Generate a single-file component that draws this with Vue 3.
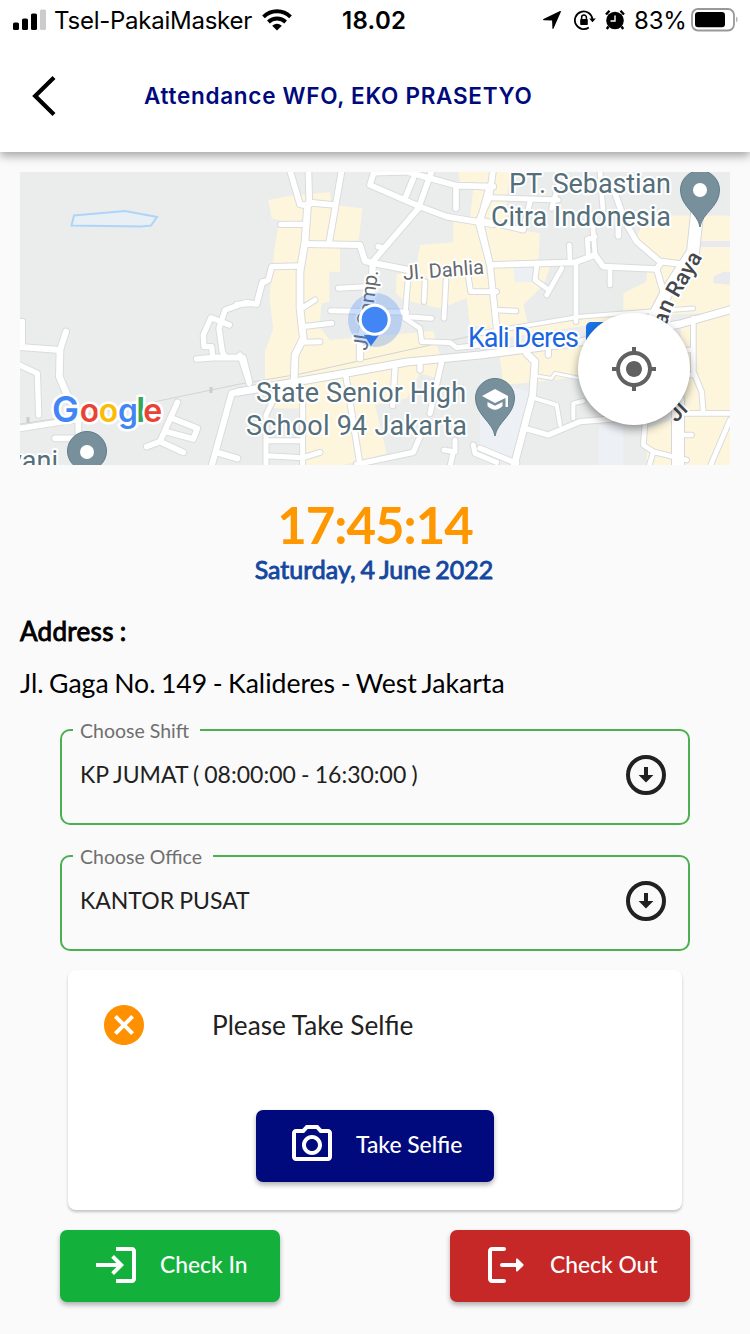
<script setup>
// Map geometry is stored in three side-by-side tiles, each on a 3x grid.
const tiles = [
  {
    x: 10,
    blocks: [],
    roads: [
      ['M20 545L150 555L168 500M36 470L36 545', 18],
      ['M150 555L148 635L180 710', 20],
      ['M20 596L82 625L86 750', 16],
      ['M20 792L220 760M205 760V800M135 820H190', 17],
      ['M560 582L620 577L700 578L718 650', 17],
      ['M658 480L603 458L580 510L582 545H605L608 575', 16],
      ['M758 350L740 418L710 412L645 435L627 490L637 560L645 575', 16],
      ['M603 910L665 685L760 670M620 862L682 880', 18],
      ['M502 712L450 830L410 845M450 830L520 862M487 760L562 790L550 822L470 800', 17]
    ]
  },
  {
    x: 240,
    blocks: [
      ['M85 105L150 92L270 82L275 120L367 130L355 235L300 235V320H268V410L245 415L238 485L270 525L580 498L600 570L590 640L540 625L500 700L405 720L440 865L350 890L290 905H190L170 660L75 650V560L100 490L88 400L105 240L118 165L95 160Z', '#fef6dc'],
      ['M655 15H800V180L735 190L770 490L690 480L680 400L600 430L490 405L468 385L470 330L530 300L540 240L640 232V170L690 165L700 70L660 50Z', '#fef6dc'],
      ['M75 730H180V700L100 710Z', '#fef6dc']
    ],
    roads: [
      ['M148 10L180 118L203 123M205 10L208 118M306 10L268 230M208 113L285 120', 17],
      ['M203 118L195 230L180 320V430L190 520L165 570L162 655', 20],
      ['M122 178H195', 16],
      ['M195 237L360 240L375 288L400 294L520 318', 18],
      ['M180 303L95 305L85 345L65 355L50 415L-10 418', 16],
      ['M185 430L225 405M185 485L275 475M188 532L240 530M295 370L378 365M272 437L500 442', 15],
      ['M398 292L395 400L360 520V580', 19],
      ['M398 290L535 130L578 10M415 245L430 250', 17],
      ['M405 10L390 60L540 125L620 155L760 178M405 23L500 20L650 62L760 65M520 40L495 100M648 70V130', 17],
      ['M748 65L720 170L750 300', 18],
      ['M505 330L495 455L575 460M555 350L552 410M618 345L612 460M685 335L692 380H770', 14],
      ['M495 460L540 490L545 530L630 533L650 548L770 535', 14],
      ['M0 570L28 655M318 635L360 900M465 610L458 722M540 595V615M605 590L570 745M540 815L520 862L350 898', 16],
      ['M162 655L100 705L78 750V905M188 670V905M80 827H185M80 872L190 878L240 862M612 855L640 860L630 905M645 825L645 860M700 840L705 865L770 892', 15]
    ]
  },
  {
    x: 480,
    blocks: [
      ['M40 21H90L80 95L25 90Z', '#fef6dc'],
      ['M15 180L180 205L175 290L30 300Z', '#fef6dc'],
      ['M30 305L560 300V445L0 530V300Z', '#fef6dc'],
      ['M285 300H500V350L430 385V440L145 480L130 420L190 360L210 305Z', '#e9eceb'],
      ['M100 305H165L170 350L105 352Z', '#eceff4'],
      ['M500 152H760V440L530 450L490 360L540 290L460 235Z', '#fef6dc'],
      ['M60 575L400 520V620L220 645L70 660Z', '#fef6dc'],
      ['M600 480L760 435V910H500V790L620 750Z', '#fef6dc'],
      ['M0 640L150 680L95 880L0 850Z', '#edf0f4'],
      ['M355 780H430V910H355Z', '#edf0f5'],
      ['M700 335L730 320H760V360L700 355Z', '#e8eaed'],
      ['M660 228H760V246H660Z', '#e8eaf0']
    ],
    roads: [
      ['M40 10L28 98L-5 170L30 300L50 490', 17],
      ['M0 65H30M28 98L235 105M150 110L130 195L0 165M235 60L215 130', 15],
      ['M30 300L285 292L345 270L370 305L530 312L545 290L625 300', 17],
      ['M45 435L108 438M268 240L270 290M288 290V470M170 305L165 345L200 370M245 310L200 390M390 310V360M325 275L322 222L345 215M345 270L338 180', 14],
      ['M400 70L435 170L470 230L540 290M415 180V212M530 312L550 380', 17],
      ['M360 20L370 150M300 170L340 180', 14],
      ['M0 505L300 455L640 430', 11],
      ['M140 565L165 590L158 690L100 910', 20],
      ['M165 632L215 640L225 625L300 640', 8],
      ['M165 700L230 720L240 780M280 760V715L310 708', 12],
      ['M135 790L205 810L300 770L450 758M0 850L110 895M205 555V570', 16],
      ['M640 460V620L665 680L670 745M600 745H760M750 765L690 905M495 775L490 840L520 860L505 910M520 860L620 885M600 810H635M610 630H645M600 555H640', 14]
    ]
  }
]

const brand = [
  { c: 'G', x: 52, s: 36, fill: '#4285f4' },
  { c: 'o', x: 79.7, s: 32, fill: '#ea4335' },
  { c: 'o', x: 98.8, s: 32, fill: '#fbbc05' },
  { c: 'g', x: 118, s: 32, fill: '#4285f4' },
  { c: 'l', x: 136.3, s: 34, fill: '#34a853' },
  { c: 'e', x: 143.2, s: 32, fill: '#ea4335' }
]

const fields = [
  { label: 'Choose Shift', value: 'KP JUMAT ( 08:00:00 - 16:30:00 )', cls: 'shift' },
  { label: 'Choose Office', value: 'KANTOR PUSAT', cls: 'office' }
]
</script>

<template>
  <div class="screen">
    <header class="top">
      <div class="status">
        <svg class="signal" width="34" height="22" viewBox="0 0 34 22">
          <rect x="0" y="13.5" width="6" height="7.5" rx="1.6" />
          <rect x="9" y="9.5" width="6" height="11.5" rx="1.6" />
          <rect x="18" y="4.5" width="6" height="16.5" rx="1.6" />
          <rect x="27" y="0.5" width="6" height="20.5" rx="1.6" fill="#ccc" />
        </svg>
        <span class="carrier">Tsel-PakaiMasker</span>
        <svg class="wifi" width="30" height="22" viewBox="0 0 30 22">
          <g fill="none" stroke="#000" stroke-width="3.9">
            <path d="M1.5 7.8C9 .4 21 .4 28.500 7.800" />
            <path d="M6.400 13C11.300 8.300 18.700 8.300 23.600 13" />
          </g>
          <path d="M10.200 16.700Q15 12.700 19.800 16.700L15 21.500Z" />
        </svg>
        <span class="clock">18.02</span>
        <svg class="loc" width="20" height="20" viewBox="0 0 20 20"><path d="M18 1Q19.300.6 18.800 2L11.500 18.500Q10.700 19.800 10.400 18.300L10.100 10.500L1.700 10.200Q.3 9.800 1.500 9Z" /></svg>
        <svg class="lock" width="22" height="20" viewBox="0 0 22 20">
          <path d="M14.800 17.400A8.800 8.800 0 1 1 18.400 9" fill="none" stroke="#000" stroke-width="1.800" />
          <path d="M15.200 8.400H21.800L18.500 12.300Z" />
          <rect x="6.200" y="9" width="7.600" height="6" rx=".8" />
          <path d="M7.600 9.500V7.500a2.400 2.400 0 0 1 4.800 0V9.500" fill="none" stroke="#000" stroke-width="1.500" />
        </svg>
        <svg class="alarm" width="20" height="20" viewBox="0 0 20 20">
          <circle cx="10" cy="10.500" r="8.800" />
          <path d="M1 4.500L4.500.8M19 4.500L15.500.8M3.500 16.500L1.800 19M16.500 16.500L18.200 19" stroke="#000" stroke-width="2.400" />
          <path d="M10 5.500V11H5.500" fill="none" stroke="#fff" stroke-width="1.400" />
        </svg>
        <span class="percent">83%</span>
        <svg class="battery" width="48" height="24" viewBox="0 0 48 24">
          <rect x="1" y="1" width="42" height="21.500" rx="6" fill="none" stroke="#999" stroke-width="1.800" />
          <rect x="4" y="4" width="30" height="15.300" rx="3.200" />
          <path d="M45.300 8.300Q47.800 11.500 45.300 14.800Z" fill="#999" />
        </svg>
      </div>
      <div class="bar">
        <svg class="back" width="24" height="40" viewBox="0 0 24 40"><path d="M22 1.500L3.200 20L22 38.500" fill="none" stroke="#000" stroke-width="4.200" /></svg>
        <h1>Attendance WFO, EKO PRASETYO</h1>
      </div>
    </header>

    <section class="map">
      <svg width="710" height="293" viewBox="20 172 710 293">
        <rect x="20" y="172" width="710" height="293" fill="#ebedec" />
        <g v-for="t in tiles" :key="'b' + t.x" :transform="`translate(${t.x} 165) scale(.33333)`">
          <path v-for="(b, i) in t.blocks" :key="i" :d="b[0]" :fill="b[1]" />
        </g>
        <path d="M71.500 225.500L74 215.500L125 211L157 217L151 225.500L141 226.500Z" fill="#e8f0f6" stroke="#aed5f8" stroke-width="2" />
        <path d="M20 424L120 409L240 384L300 374L480 334L600 316" fill="none" stroke="#d2d4d5" stroke-width="1" />
        <path d="M28 417V423M211 387V393" stroke="#ccc" stroke-width="3" />
        <g fill="none" stroke-linecap="round" stroke-linejoin="round">
          <g v-for="t in tiles" :key="'c' + t.x" :transform="`translate(${t.x} 165) scale(.33333)`" stroke="#d9dbdd">
            <path v-for="(r, i) in t.roads" :key="i" :d="r[0]" :stroke-width="r[1] + 6" />
          </g>
          <path d="M238 392L295 382L347 373L407 362L480 355L580 342L680 324L740 307" stroke="#d5d8da" stroke-width="9" />
          <path d="M698 205L693 252L667 292L650 325M678 400V470" stroke="#d5d8da" stroke-width="14" />
          <g v-for="t in tiles" :key="'w' + t.x" :transform="`translate(${t.x} 165) scale(.33333)`" stroke="#fff">
            <path v-for="(r, i) in t.roads" :key="i" :d="r[0]" :stroke-width="r[1]" />
          </g>
          <path d="M238 392L295 382L347 373L407 362L480 355L580 342L680 324L740 307" stroke="#fff" stroke-width="7" />
          <path d="M698 205L693 252L667 292L650 325M678 400V470" stroke="#fff" stroke-width="12" />
        </g>

        <g class="road-name">
          <text x="403.500" y="280" textLength="81" transform="rotate(-4.500 404 279)" font-size="20">Jl. Dahlia</text>
          <text x="367" y="351" textLength="81" transform="rotate(-82 367 351)" font-size="20">Jl. Camp.</text>
          <path id="raya" d="M667 326Q669 310 680 295L709 246" fill="none" />
          <text font-size="22" class="dark"><textPath href="#raya" textLength="78">an Raya</textPath></text>
          <text x="676" y="423" font-size="22" class="dark" transform="rotate(-45 676 423)">Jl</text>
        </g>

        <g class="place">
          <text x="509" y="192.500" textLength="162">PT. Sebastian</text>
          <text x="491" y="225.500" textLength="180">Citra Indonesia</text>
          <text x="256" y="401.500" textLength="210">State Senior High</text>
          <text x="246" y="434.500" textLength="221">School 94 Jakarta</text>
          <text x="9" y="470" textLength="49">yani</text>
          <text x="468" y="346.500" textLength="111" class="transit">Kali Deres</text>
        </g>
        <rect x="586" y="322" width="28" height="28" rx="5" fill="#1a73e8" />

        <g fill="#78909c" stroke="#607d8b" stroke-width="1">
          <circle cx="87" cy="451" r="19.500" />
          <path d="M700 227C698 213 680.500 207 680.500 190A19.500 19.500 0 0 1 719.500 190C719.500 207 702 213 700 227Z" />
          <path d="M495 436C493 422 475.500 415 475.500 398A19.500 19.500 0 0 1 514.500 398C514.500 415 497 422 495 436Z" />
        </g>
        <circle cx="87" cy="452" r="7" fill="#fff" />
        <circle cx="700" cy="190" r="7" fill="#fff" />
        <path d="M482 396L495 389L508 396V407H505.500V398L495 403ZM487.500 402L495 405.800L502.500 402V406Q495 413.500 487.500 406Z" fill="#fff" />

        <circle cx="375" cy="320" r="27" fill="#4285f4" fill-opacity=".28" />
        <path d="M364 335L371 346L379 335Z" fill="#3478e5" />
        <circle cx="374.700" cy="319.700" r="14.500" fill="#4285f4" stroke="#fff" stroke-width="3" />

        <text class="brand" y="422"><tspan v-for="(b, i) in brand" :key="i" :x="b.x" :font-size="b.s" :fill="b.fill">{{ b.c }}</tspan></text>
      </svg>
      <button class="locate" aria-label="My location">
        <svg width="48" height="48" viewBox="0 0 24 24" fill="#616161"><path d="M12 8c-2.210 0-4 1.790-4 4s1.790 4 4 4 4-1.790 4-4-1.790-4-4-4zm8.940 3A8.994 8.994 0 0 0 13 3.060V1h-2v2.060A8.994 8.994 0 0 0 3.060 11H1v2h2.060A8.994 8.994 0 0 0 11 20.940V23h2v-2.060A8.994 8.994 0 0 0 20.940 13H23v-2h-2.060zM12 19c-3.870 0-7-3.130-7-7s3.130-7 7-7 7 3.130 7 7-3.130 7-7 7z" /></svg>
      </button>
    </section>

    <div class="time">17:45:14</div>
    <div class="date">Saturday, 4 June 2022</div>
    <div class="addr-title">Address :</div>
    <div class="addr">Jl. Gaga No. 149 - Kalideres - West Jakarta</div>

    <div class="fields">
      <fieldset v-for="f in fields" :key="f.label" :class="f.cls">
        <legend>{{ f.label }}</legend>
        <div class="row">
          <span>{{ f.value }}</span>
          <svg width="48" height="48" viewBox="0 0 24 24">
            <circle cx="12" cy="12" r="9" fill="none" stroke="#212121" stroke-width="2" />
            <path d="M11 8h2v4h2.700L12 15.800L8.300 12H11z" fill="#212121" />
          </svg>
        </div>
      </fieldset>
    </div>

    <section class="card">
      <div class="notice">
        <svg width="48" height="48" viewBox="0 0 24 24" fill="#ff9100"><path d="M12 2C6.470 2 2 6.470 2 12s4.470 10 10 10 10-4.470 10-10S17.530 2 12 2zm5 13.590L15.590 17 12 13.410 8.410 17 7 15.590 10.590 12 7 8.410 8.410 7 12 10.590 15.590 7 17 8.410 13.410 12 17 15.590z" /></svg>
        <span>Please Take Selfie</span>
      </div>
      <button class="btn selfie">
        <svg width="48" height="48" viewBox="0 0 24 24" fill="#fff"><path d="M14.120 4l1.830 2H20v12H4V6h4.050l1.830-2h4.240M15 2H9L7.170 4H4c-1.100 0-2 .9-2 2v12c0 1.100.9 2 2 2h16c1.100 0 2-.9 2-2V6c0-1.100-.9-2-2-2h-3.170L15 2zm-3 7c1.650 0 3 1.350 3 3s-1.350 3-3 3-3-1.350-3-3 1.350-3 3-3m0-2c-2.760 0-5 2.240-5 5s2.240 5 5 5 5-2.240 5-5-2.240-5-5-5z" /></svg>
        <span>Take Selfie</span>
      </button>
    </section>

    <div class="actions">
      <button class="btn in">
        <svg width="48" height="48" viewBox="0 0 24 24" fill="#fff"><path d="M11 7L9.600 8.400l2.600 2.600H2v2h10.200l-2.600 2.600L11 17l5-5-5-5zm9 12h-8v2h8c1.100 0 2-.9 2-2V5c0-1.100-.9-2-2-2h-8v2h8v14z" /></svg>
        <span>Check In</span>
      </button>
      <button class="btn out">
        <svg width="48" height="48" viewBox="0 0 24 24" fill="#fff"><path d="M5 5h6c.55 0 1-.45 1-1s-.45-1-1-1H5c-1.100 0-2 .9-2 2v14c0 1.100.9 2 2 2h6c.55 0 1-.45 1-1s-.45-1-1-1H5V5z" /><path d="M20.650 11.650l-2.790-2.790c-.32-.32-.86-.1-.86.35V11h-7c-.55 0-1 .45-1 1s.45 1 1 1h7v1.790c0 .45.54.67.85.35l2.790-2.790c.2-.19.2-.51.010-.7z" /></svg>
        <span>Check Out</span>
      </button>
    </div>
  </div>
</template>

<style>
body { background: #fafafa; }
</style>

<style scoped>
.screen {
  width: 750px;
  height: 1334px;
  overflow: hidden;
  background: #fafafa;
  font-family: Lato, "Liberation Sans", sans-serif;
  color: #000;
}
svg { display: block; flex: none; }
.top {
  position: relative;
  height: 152px;
  background: #fff;
  box-shadow: 0 4px 9px rgba(0, 0, 0, .34);
  font-family: Inter, "Liberation Sans", sans-serif;
}
.status {
  display: flex;
  align-items: center;
  height: 40px;
  padding-left: 13px;
  font-size: 24px;
  white-space: nowrap;
}
.status span { padding-top: 1px; }
.carrier { width: 201px; margin-left: 7px; letter-spacing: -.25px; }
.wifi { margin-left: 7px; }
.clock { width: 66px; margin-left: 50px; font-weight: 600; letter-spacing: .3px; }
.loc { margin-left: 134px; }
.lock { margin-left: 12px; }
.alarm { margin-left: 9px; }
.percent { width: 50px; margin-left: 9px; letter-spacing: -.2px; }
.battery { margin-left: 7px; }
.bar { display: flex; align-items: center; height: 112px; padding-left: 32px; }
h1 { margin: -2px 0 0 88px; font-size: 22.500px; font-weight: 600; letter-spacing: .72px; color: #000a7c; white-space: nowrap; }
.map { position: relative; width: 710px; height: 293px; margin: 20px 20px 0; overflow: hidden; }
.map text { font-family: Roboto, "Liberation Sans", sans-serif; paint-order: stroke; stroke: #fff; stroke-width: 4px; stroke-linejoin: round; }
.road-name text { fill: #65696d; font-weight: 400; }
.road-name .dark { fill: #44474b; font-weight: 500; }
.place text { font-size: 27px; fill: #546e7a; }
.place .transit { fill: #1a66e0; }
.map .brand { font-family: Inter, sans-serif; font-weight: 600; stroke-width: 5px; }
.locate {
  position: absolute;
  left: 558px;
  top: 141px;
  display: flex;
  align-items: center;
  justify-content: center;
  width: 112px;
  height: 112px;
  padding: 0;
  border: 0;
  border-radius: 50%;
  background: #fff;
  box-shadow: 0 4px 10px rgba(0, 0, 0, .4);
}
.time { margin-top: 29px; line-height: 62px; height: 60px; font-size: 51px; font-weight: 700; letter-spacing: -1px; text-align: center; color: #ff9800; }
.date {
  margin-top: -1px;
  padding-right: 2px;
  line-height: 33px;
  height: 32px;
  font-size: 25px;
  -webkit-text-stroke: .9px #1547a0;
  word-spacing: -1.500px;
  text-align: center;
  color: #1547a0;
}
.addr-title { margin: 30px 20px 0; line-height: 32px; font-size: 26px; letter-spacing: .3px; -webkit-text-stroke: .9px #000; word-spacing: -1px; }
.addr { margin: 20px 20px 0; line-height: 32px; font-size: 26.600px; word-spacing: -1.300px; white-space: nowrap; }
.fields { display: grid; gap: 19px; margin: 19px 60px 0; }
fieldset {
  box-sizing: border-box;
  height: 107px;
  min-width: 0;
  margin: 0;
  padding: 0 18px 0 11px;
  border: 2px solid #4caf50;
  border-radius: 10px;
}
legend { height: 24px; padding: 0 11px 0 7px; line-height: 26px; font-size: 19.500px; color: #6f6f6f; }
.row { display: flex; align-items: center; justify-content: space-between; height: 48px; margin-top: 9px; padding-left: 7px; font-size: 23px; word-spacing: -.7px; color: #212121; }
.row span { padding-bottom: 2px; }
.card {
  box-sizing: border-box;
  width: 614px;
  height: 240px;
  margin: 19px auto 0;
  padding-top: 31px;
  border-radius: 8px;
  background: #fff;
  box-shadow: 0 2px 3px rgba(0, 0, 0, .22);
}
.notice { display: flex; align-items: center; gap: 64px; height: 48px; padding-left: 32px; font-size: 26.200px; color: #212121; }
.btn {
  display: flex;
  align-items: center;
  gap: 20px;
  height: 72px;
  padding: 0 0 2px 32px;
  border: 0;
  border-radius: 7px;
  color: #fff;
  font: 500 22.800px Lato, "Liberation Sans", sans-serif;
  white-space: nowrap;
  box-shadow: 0 3px 5px rgba(0, 0, 0, .3);
}
.btn span { padding-bottom: 2px; }
.selfie { width: 238px; margin: 60.500px auto 0; background: #000a7c; }
.actions { display: flex; justify-content: space-between; margin: 19.500px 60px 0; }
.in { width: 220px; background: #13b13c; }
.out { width: 240px; background: #c62828; }
</style>
